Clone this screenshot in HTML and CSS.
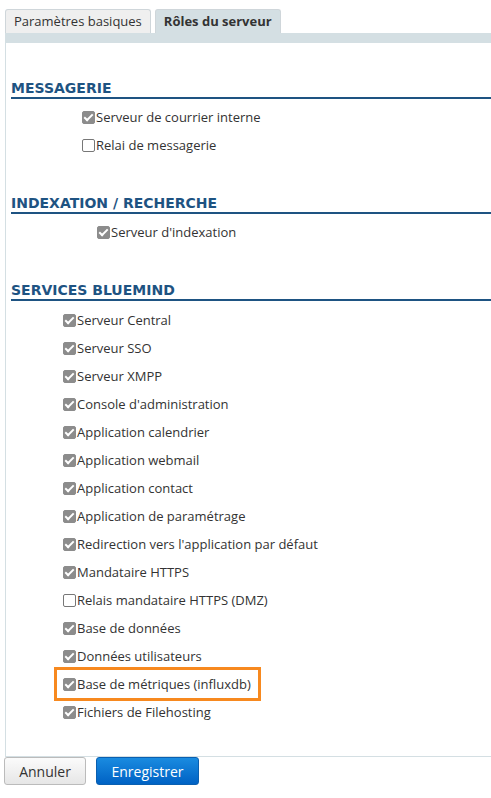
FILE: index.html
```html
<!DOCTYPE html>
<html>
<head>
    <title>Rôles du serveur</title>
    <meta name="viewport" content="width=device-width, initial-scale=1.0">
    <link rel="stylesheet" href="styles.css">
</head>
<body>
    <div class="tabs">
        <div class="tab">Paramètres basiques</div>
        <div class="tab active">Rôles du serveur</div>
    </div>
    <div class="tab-strip"></div>

    <div class="panel">
        <section class="group">
            <h2>MESSAGERIE</h2>
            <div class="items items-mail">
                <label class="item"><span class="box checked"></span>Serveur de courrier interne</label>
                <label class="item"><span class="box"></span>Relai de messagerie</label>
            </div>
        </section>

        <section class="group">
            <h2>INDEXATION / RECHERCHE</h2>
            <div class="items items-index">
                <label class="item"><span class="box checked"></span>Serveur d'indexation</label>
            </div>
        </section>

        <section class="group">
            <h2>SERVICES BLUEMIND</h2>
            <div class="items items-services">
                <label class="item"><span class="box checked"></span>Serveur Central</label>
                <label class="item"><span class="box checked"></span>Serveur SSO</label>
                <label class="item"><span class="box checked"></span>Serveur XMPP</label>
                <label class="item"><span class="box checked"></span>Console d'administration</label>
                <label class="item"><span class="box checked"></span>Application calendrier</label>
                <label class="item"><span class="box checked"></span>Application webmail</label>
                <label class="item"><span class="box checked"></span>Application contact</label>
                <label class="item"><span class="box checked"></span>Application de paramétrage</label>
                <label class="item"><span class="box checked"></span>Redirection vers l'application par défaut</label>
                <label class="item"><span class="box checked"></span>Mandataire HTTPS</label>
                <label class="item"><span class="box"></span>Relais mandataire HTTPS (DMZ)</label>
                <label class="item"><span class="box checked"></span>Base de données</label>
                <label class="item"><span class="box checked"></span>Données utilisateurs</label>
                <label class="item highlight"><span class="box checked"></span>Base de métriques (influxdb)</label>
                <label class="item"><span class="box checked"></span>Fichiers de Filehosting</label>
            </div>
        </section>
    </div>

    <div class="actions">
        <button class="btn btn-cancel">Annuler</button>
        <button class="btn btn-save">Enregistrer</button>
    </div>
</body>
</html>
```

FILE: styles.css
```css
body {
    margin: 0;
    padding: 9px 0 0 5px;
    font-family: 'Open Sans', 'Noto Sans', sans-serif;
    font-size: 13px;
    color: #333;
    background: #fff;
}

.tabs {
    display: flex;
    gap: 4px;
    height: 24px;
}

.tab {
    padding: 0 8px;
    line-height: 23px;
    border: 1px solid #cfd6da;
    border-bottom: none;
    border-radius: 3px 3px 0 0;
    background: #efefef;
    color: #333;
}

.tab.active {
    background: #d4dfe3;
    font-weight: bold;
}

.tab-strip {
    height: 10px;
    background: #d4dfe3;
}

.panel {
    border-left: 1px solid #d4dfe3;
    border-bottom: 1px solid #d4dfe3;
    padding: 36px 0 30px 5px;
}

.group {
    margin-bottom: 35px;
}

.group:last-child {
    margin-bottom: 0;
}

.group h2 {
    margin: 0;
    font-family: 'DejaVu Sans', sans-serif;
    font-size: 14px;
    line-height: 18px;
    font-weight: bold;
    color: #1e5382;
    padding-bottom: 0;
    border-bottom: 2px solid #1e5382;
}

.items {
    display: flex;
    flex-direction: column;
    padding-top: 4px;
}

.items-mail {
    padding-left: 71px;
}

.items-index {
    padding-left: 86px;
}

.items-services {
    padding-left: 52px;
    padding-top: 5px;
}

.item {
    display: flex;
    align-items: center;
    height: 28px;
    width: max-content;
    color: #333;
}

.box {
    width: 11px;
    height: 11px;
    border: 1px solid #777;
    border-radius: 2px;
    margin-right: 1px;
    position: relative;
    background: #fff;
}

.box.checked {
    background: #8c8c8c;
    border-color: #8c8c8c;
}

.box.checked::after {
    content: '';
    position: absolute;
    left: 3px;
    top: 0px;
    width: 3px;
    height: 7px;
    border: solid #fff;
    border-width: 0 2px 2px 0;
    transform: rotate(45deg);
}

.highlight {
    outline: 3px solid #f7891f;
    padding: 0 7px 0 6px;
    margin-left: -6px;
}

.actions {
    display: flex;
    gap: 10px;
    margin-left: -1px;
}

.btn {
    font-family: inherit;
    font-size: 14px;
    height: 28px;
    border-radius: 3px;
    cursor: pointer;
}

.btn-cancel {
    width: 82px;
    background: linear-gradient(#fbfbfb, #e6e6e6);
    border: 1px solid #bbb;
    color: #333;
}

.btn-save {
    width: 103px;
    background: linear-gradient(#1a8be0, #0062c4);
    border: 1px solid #0a5fb0;
    color: #fff;
}
```
